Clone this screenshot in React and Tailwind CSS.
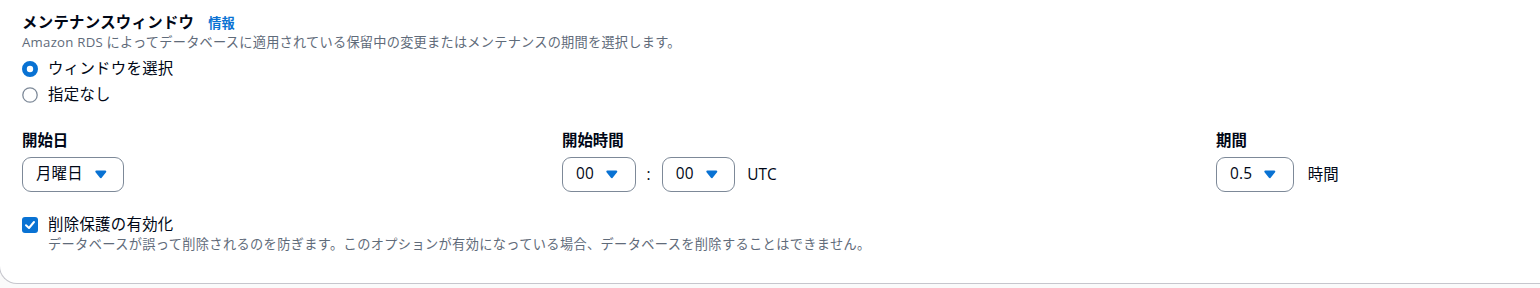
import React from "react";

function Caret() {
  return (
    <svg width="17.6" height="17.6" viewBox="0 0 16 16" className="shrink-0">
      <path d="M8 11 12 6H4l4 5Z" fill="#0972d3" stroke="#0972d3" strokeWidth="2" strokeLinejoin="round" />
    </svg>
  );
}

function Select({ value }) {
  return (
    <div className="inline-flex items-center h-[35px] border border-[#7d8998] rounded-[9px] pl-[13px] pr-[14px] gap-[9px] bg-white text-[15.4px] leading-[22px] tracking-[0.2px] text-[#000716]">
      <span>{value}</span>
      <Caret />
    </div>
  );
}

function Radio({ checked, label }) {
  return (
    <div className="flex items-center gap-[10px] h-[22px]">
      <svg width="16" height="16" viewBox="0 0 100 100" className="shrink-0">
        {checked ? (
          <circle cx="50" cy="50" r="35" fill="#fff" stroke="#0972d3" strokeWidth="30" />
        ) : (
          <circle cx="50" cy="50" r="45" fill="#fff" stroke="#7d8998" strokeWidth="8" />
        )}
      </svg>
      <span className="text-[15.4px] leading-[22px] tracking-[0.3px] text-[#000716]">{label}</span>
    </div>
  );
}

export default function App() {
  return (
    <div className="w-[1540px] h-[288px] bg-[#fafafa] overflow-hidden font-['Open_Sans','Noto_Sans_CJK_JP',sans-serif]">
      <div className="-ml-px w-[1600px] h-[284px] bg-white border-l border-b border-[#c6c6cd] rounded-bl-[18px] pl-[22px] pt-[12px]">
        <div className="flex items-baseline h-[22px]">
          <span className="text-[15.4px] leading-[22px] tracking-[0.3px] font-bold text-[#000716]">メンテナンスウィンドウ</span>
          <span className="ml-[14px] text-[13.2px] font-bold text-[#0972d3]">情報</span>
        </div>
        <div className="text-[13.2px] leading-[17.6px] tracking-[0.25px] text-[#5f6b7a]">
          Amazon RDS によってデータベースに適用されている保留中の変更またはメンテナンスの期間を選択します。
        </div>
        <div className="mt-[6px] flex flex-col gap-[4px]">
          <Radio checked label="ウィンドウを選択" />
          <Radio label="指定なし" />
        </div>
        <div className="mt-[24px] grid grid-cols-[540px_654px_auto]">
          <div className="flex flex-col items-start gap-[5px]">
            <span className="text-[15.4px] leading-[22px] font-bold text-[#000716]">開始日</span>
            <Select value="月曜日" />
          </div>
          <div className="flex flex-col items-start gap-[5px]">
            <span className="text-[15.4px] leading-[22px] font-bold text-[#000716]">開始時間</span>
            <div className="flex items-center gap-[11px]">
              <Select value="00" />
              <span className="text-[15.4px] text-[#000716]">:</span>
              <Select value="00" />
              <span className="ml-[1px] text-[15.4px] text-[#000716]">UTC</span>
            </div>
          </div>
          <div className="flex flex-col items-start gap-[5px]">
            <span className="text-[15.4px] leading-[22px] font-bold text-[#000716]">期間</span>
            <div className="flex items-center gap-[14px]">
              <Select value="0.5" />
              <span className="text-[15.4px] text-[#000716]">時間</span>
            </div>
          </div>
        </div>
        <div className="mt-[22px] flex gap-[10px]">
          <div className="h-[22px] flex items-center">
            <svg width="16" height="16" viewBox="0 0 16 16" className="shrink-0">
              <rect x="0" y="0" width="16" height="16" rx="3" fill="#0972d3" />
              <polyline points="4,8.2 7,11 12,5" fill="none" stroke="#fff" strokeWidth="2" strokeLinecap="round" strokeLinejoin="round" />
            </svg>
          </div>
          <div className="flex flex-col">
            <span className="text-[15.4px] leading-[22px] tracking-[0.3px] text-[#000716]">削除保護の有効化</span>
            <span className="text-[13.2px] leading-[17.6px] tracking-[0.37px] text-[#5f6b7a]">
              データベースが誤って削除されるのを防ぎます。このオプションが有効になっている場合、データベースを削除することはできません。
            </span>
          </div>
        </div>
      </div>
    </div>
  );
}
